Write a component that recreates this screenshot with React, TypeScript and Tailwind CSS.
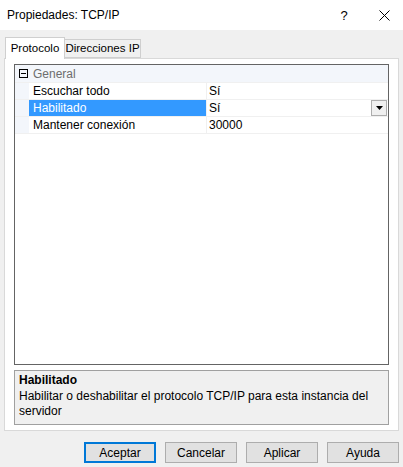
import { useState } from 'react';

interface Row {
  name: string;
  value: string;
}

const rows: Row[] = [
  { name: 'Escuchar todo', value: 'Sí' },
  { name: 'Habilitado', value: 'Sí' },
  { name: 'Mantener conexión', value: '30000' },
];

const font = { fontFamily: '"Liberation Sans", Arial, sans-serif' };

export default function App() {
  const [selected, setSelected] = useState('Habilitado');

  return (
    <div
      className="w-[403px] h-[467px] bg-[#f0f0f0] flex flex-col text-[12px] text-black overflow-hidden"
      style={font}
    >
      {/* title bar */}
      <div className="h-[30px] bg-white flex items-center shrink-0">
        <span className="pl-[7px] flex-1 text-[12px] leading-none">Propiedades: TCP/IP</span>
        <span className="w-[20px] text-center text-[13px] leading-none mr-[25px]">?</span>
        <svg width="11" height="11" viewBox="0 0 11 11" className="mr-[13px]">
          <path d="M0.5 0.5 L10.5 10.5 M10.5 0.5 L0.5 10.5" stroke="#000" strokeWidth="1" />
        </svg>
      </div>

      <div className="flex-1 flex flex-col pt-[7px] pl-[4px] pr-[4px] pb-[4px]">
        {/* tabs */}
        <div className="flex items-end h-[21px] pl-[1px] relative z-10">
          <div className="h-[22px] w-[60px] bg-white border border-b-0 border-[#cfcfcf] flex items-center justify-center -mb-[1px] whitespace-nowrap text-[11.5px]">
            Protocolo
          </div>
          <div className="h-[19px] w-[76px] bg-[#f0f0f0] border border-l-0 border-[#cfcfcf] flex items-center justify-center whitespace-nowrap text-[11.5px]">
            Direcciones IP
          </div>
        </div>

        {/* tab panel */}
        <div className="h-[373px] bg-white border border-[#d9d9d9] flex flex-col pt-[5px] px-[9px] pb-[5px] gap-[5px]">
          {/* property grid */}
          <div className="flex-1 border border-[#646464] bg-white flex flex-col">
            <div className="h-[18px] bg-[#f3f6fb] border-b border-[#f0f0f0] flex items-center">
              <div className="w-[14px] flex items-center justify-center">
                <div className="w-[9px] h-[9px] border border-black flex items-center justify-center ml-[2px]">
                  <div className="w-[5px] h-[1px] bg-black" />
                </div>
              </div>
              <span className="pl-[4px] text-[#6d6d6d]">General</span>
            </div>
            {rows.map((r) => {
              const active = r.name === selected;
              return (
                <div
                  key={r.name}
                  onClick={() => setSelected(r.name)}
                  className="h-[17px] flex border-b border-[#f0f0f0]"
                >
                  <div className="w-[14px] bg-[#f3f6fb]" />
                  <div
                    className={
                      active
                        ? 'w-[178px] bg-[#3399ff] text-white pl-[4px] flex items-center border-r border-[#f0f0f0]'
                        : 'w-[178px] bg-white pl-[4px] flex items-center border-r border-[#f0f0f0]'
                    }
                  >
                    {r.name}
                  </div>
                  <div className="flex-1 flex items-center pl-[2px]">
                    <span className="flex-1">{r.value}</span>
                    {active && (
                      <div className="w-[16px] h-[16px] bg-[#f0f0f0] border border-[#adadad] flex items-center justify-center mr-[1px]">
                        <svg width="7" height="4" viewBox="0 0 7 4">
                          <path d="M0 0 H7 L3.5 4 Z" fill="#000" />
                        </svg>
                      </div>
                    )}
                  </div>
                </div>
              );
            })}
          </div>

          {/* description */}
          <div className="h-[55px] border border-[#a0a0a0] bg-[#f0f0f0] pl-[4px] pt-[2px] leading-[15px]">
            <div className="font-bold">Habilitado</div>
            <div className="pt-[1px]">
              Habilitar o deshabilitar el protocolo TCP/IP para esta instancia del servidor
            </div>
          </div>
        </div>

        {/* buttons */}
        <div className="flex justify-end gap-[9px] mt-[11px]">
          <button className="w-[72px] h-[21px] bg-[#e1e1e1] border-2 border-[#0078d7] leading-none">
            Aceptar
          </button>
          <button className="w-[72px] h-[21px] bg-[#e1e1e1] border border-[#adadad] leading-none">
            Cancelar
          </button>
          <button className="w-[72px] h-[21px] bg-[#e1e1e1] border border-[#adadad] leading-none">
            Aplicar
          </button>
          <button className="w-[72px] h-[21px] bg-[#e1e1e1] border border-[#adadad] leading-none">
            Ayuda
          </button>
        </div>
      </div>
    </div>
  );
}
